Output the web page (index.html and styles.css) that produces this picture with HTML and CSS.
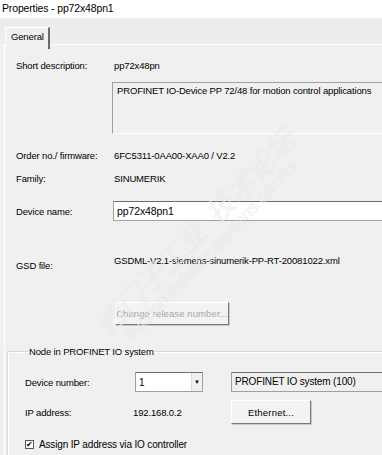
FILE: index.html
```html
<!DOCTYPE html>
<html lang="en">
<head>
    <meta charset="UTF-8">
    <title>Properties - pp72x48pn1</title>
    <link rel="stylesheet" href="styles.css">
</head>
<body>
<div class="title">Properties - pp72x48pn1</div>
<div class="tabstrip">
    <div class="tab">General</div>
</div>
<div class="panel">
    <div class="row r-short">
        <span class="label">Short description:</span>
        <span class="value">pp72x48pn</span>
    </div>
    <div class="descbox">PROFINET IO-Device PP 72/48 for motion control applications</div>
    <div class="row r-order">
        <span class="label">Order no./ firmware:</span>
        <span class="value">6FC5311-0AA00-XAA0 / V2.2</span>
    </div>
    <div class="row r-family">
        <span class="label">Family:</span>
        <span class="value">SINUMERIK</span>
    </div>
    <div class="row r-name">
        <span class="label">Device name:</span>
        <input class="textin" type="text" value="pp72x48pn1">
    </div>
    <div class="row r-gsd">
        <span class="label gsd-label">GSD file:</span>
        <span class="value">GSDML-V2.1-siemens-sinumerik-PP-RT-20081022.xml</span>
    </div>
    <button class="btn btn-release" disabled>Change release number...</button>

    <fieldset class="group">
        <legend>Node in PROFINET IO system</legend>
        <div class="grid">
            <span class="label">Device number:</span>
            <div class="combo">
                <span>1</span>
                <span class="arrow">&#9660;</span>
            </div>
            <div class="sysfield">PROFINET IO system (100)</div>

            <span class="label">IP address:</span>
            <span class="ip">192.168.0.2</span>
            <button class="btn btn-eth">Ethernet...</button>
        </div>
        <label class="check"><span class="box">&#10004;</span>Assign IP address via IO controller</label>
    </fieldset>
</div>
<div class="watermark">
    <span class="wm1">西门子工业 &nbsp;技术论坛</span>
    <span class="wm2">support.industry.siemens.com/cs</span>
</div>
</body>
</html>
```

FILE: styles.css
```css
*{
    box-sizing: border-box;
}
body{
    margin: 0;
    width: 382px;
    height: 455px;
    overflow: hidden;
    position: relative;
    background: #f0f0f0;
    color: #000;
    font-family: "Liberation Sans", Arial, sans-serif;
    font-size: 9.5px;
    letter-spacing: -0.15px;
}
.title{
    height: 18px;
    background: #fff;
    padding-left: 2px;
    line-height: 16px;
    font-size: 10.5px;
}
.tabstrip{
    height: 27px;
    background: #ededed;
    border-bottom: 1px solid #fafafa;
    padding: 9px 0 0 5px;
}
.tab{
    display: inline-block;
    height: 22px;
    padding: 2px 4px 0 5px;
    border-left: 1px solid #fff;
    border-top: 1px solid #fff;
    border-right: 2px solid #6a6a6a;
    background: #f0f0f0;
    line-height: 14px;
    position: relative;
}
.panel{
    margin-left: 4px;
    border-left: 1px solid #fff;
    padding: 12px 0 0 11px;
    height: 410px;
}
.row{
    display: flex;
    align-items: center;
    height: 16px;
}
.label{
    width: 98px;
    flex: none;
}
.descbox{
    margin: 9px 0 0 96px;
    width: 280px;
    height: 52px;
    border-top: 1px solid #a0a0a0;
    border-left: 1px solid #a0a0a0;
    border-bottom: 1px solid #fff;
    padding: 2px 0 0 4px;
    white-space: nowrap;
}
.r-order{
    margin-top: 13px;
}
.r-family{
    margin-top: 7px;
}
.r-name{
    margin-top: 15px;
    height: 20px;
}
.textin{
    margin-left: -1px;
    width: 280px;
    height: 20px;
    border: 1px solid #a0a0a0;
    border-top-color: #6e6e6e;
    border-right: none;
    background: #fff;
    padding: 0 3px;
    font: inherit;
    font-size: 10.5px;
    letter-spacing: -0.1px;
}
.r-gsd{
    margin-top: 34px;
    align-items: flex-start;
    height: 21px;
}
.gsd-label{
    margin-top: 5px;
}
.btn{
    font: inherit;
    background: #f3f3f3;
    border: 1px solid #fff;
    border-right-color: #7a7a7a;
    border-bottom-color: #7a7a7a;
    box-shadow: 1px 1px 0 #c8c8c8;
    padding: 0;
    color: #000;
    white-space: nowrap;
}
.btn-release{
    display: block;
    margin: 26px 0 0 99px;
    width: 114px;
    height: 23px;
    color: #a6a6a6;
    letter-spacing: 0.1px;
}
.group{
    margin: 21px 0 0 -9px;
    width: 400px;
    border: 1px solid #d8d8d8;
    border-right: none;
    box-shadow: inset 1px 1px 0 #fff;
    padding: 6px 0 0 17px;
    height: 110px;
}
.group legend{
    padding: 0 1px;
    margin-left: 3px;
}
.grid{
    display: grid;
    grid-template-columns: 110px 96px 1fr;
    grid-template-rows: 20px 24px;
    row-gap: 8px;
    align-items: center;
    margin-top: 9px;
}
.grid .label{
    width: auto;
}
.combo{
    width: 68px;
    height: 20px;
    background: #fff;
    border: 1px solid #a0a0a0;
    border-top-color: #6e6e6e;
    display: flex;
    align-items: center;
    justify-content: space-between;
    padding-left: 3px;
    font-size: 10px;
}
.arrow{
    width: 11px;
    height: 18px;
    border-left: 1px solid #dcdcdc;
    background: #f0f0f0;
    font-size: 6px;
    line-height: 18px;
    text-align: center;
}
.sysfield{
    height: 20px;
    border: 1px solid #a0a0a0;
    border-top-color: #6e6e6e;
    border-right: none;
    line-height: 17px;
    padding-left: 3px;
    font-size: 10px;
}
.ip{
    margin-left: -2px;
}
.btn-eth{
    width: 80px;
    height: 24px;
    letter-spacing: 0.2px;
}
.check{
    display: flex;
    align-items: center;
    margin-top: 15px;
    font-size: 10px;
}
.box{
    width: 9px;
    height: 9px;
    border: 1px solid #555;
    background: #fff;
    font-size: 8px;
    line-height: 7px;
    text-align: center;
    margin-right: 5px;
}
.watermark{
    position: absolute;
    left: 88px;
    top: 318px;
    transform: rotate(-46deg);
    transform-origin: left top;
    color: rgba(255, 255, 255, 0.6);
    text-shadow: 0 0 1px rgba(0, 0, 0, 0.12);
    pointer-events: none;
    white-space: nowrap;
}
.wm1{
    display: block;
    font-family: "Noto Sans CJK SC", sans-serif;
    font-size: 29px;
    line-height: 32px;
    font-style: italic;
}
.wm2{
    display: block;
    margin-left: 14px;
    font-size: 17px;
    font-style: italic;
}
```
